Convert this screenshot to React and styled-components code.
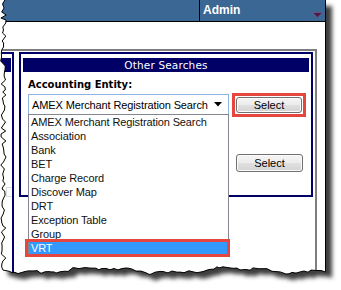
import React from 'react';
import styled, { createGlobalStyle } from 'styled-components';

const Global = createGlobalStyle`
  html, body { margin: 0; padding: 0; background: #fff; }
  body { width: 341px; height: 290px; overflow: hidden; }
  * { box-sizing: border-box; }
`;

const NAVY = '#000066';

/* ---- torn paper edge, computed once ---- */
function makeRng(seed) {
  let s = seed;
  return () => {
    s = (s * 16807) % 2147483647;
    return (s - 1) / 2147483646;
  };
}
const rnd = makeRng(98761);
const leftPts = [];
for (let y = 0; y < 270; y += 2 + Math.round(rnd() * 3)) {
  leftPts.push([+(0.6 + rnd() * 5.6).toFixed(1), y]);
}
const bottomPts = [];
for (let x = 3; x < 326; x += 2 + Math.round(rnd() * 4)) {
  const base = 270.5 + 2.2 * Math.sin(x / 21) + 1.2 * Math.sin(x / 7.3);
  bottomPts.push([x, +(base + rnd() * 3 - 1.5).toFixed(1)]);
}
const endY = 272;
const edgePts = [...leftPts, ...bottomPts, [325.5, endY]];
const clipPoly = `polygon(${[...leftPts, ...bottomPts, [326, endY], [326, 0]]
  .map(([x, y]) => `${x}px ${y}px`)
  .join(', ')})`;
const outlineD = 'M' + edgePts.map(([x, y]) => `${x} ${y}`).join(' L');
const shadowPts = [...leftPts, ...bottomPts, [326, endY], [326, 0]]
  .map(([x, y]) => `${x + 6},${y + 6}`)
  .join(' ');

const ITEMS = [
  'AMEX Merchant Registration Search',
  'Association',
  'Bank',
  'BET',
  'Charge Record',
  'Discover Map',
  'DRT',
  'Exception Table',
  'Group',
  'VRT',
];

/* ---- styled parts ---- */
const Stage = styled.div`
  position: relative;
  width: 341px;
  height: 290px;
  overflow: hidden;
  background: #fff;
`;

const Layer = styled.svg`
  position: absolute;
  left: 0;
  top: 0;
  z-index: ${(p) => p.$z};
  pointer-events: none;
`;

const Sheet = styled.div`
  position: relative;
  z-index: 1;
  width: 326px;
  height: 290px;
  background: #fff;
  border-right: 1px solid #000;
  clip-path: ${clipPoly};
`;

const TopBar = styled.div`
  display: flex;
  height: 22px;
  background: #3b6795;
  border-bottom: 1px solid #000;
`;

const BarFill = styled.div`
  flex: 1;
`;

const AdminCell = styled.div`
  width: 126px;
  border-left: 1px solid #000;
  display: flex;
  justify-content: space-between;
  padding: 0 2px 0 3px;
`;

const AdminLabel = styled.span`
  font-family: 'Liberation Sans', Arial, sans-serif;
  font-weight: bold;
  font-size: 12px;
  line-height: 20px;
  color: #fff;
`;

const Caret = styled.svg`
  align-self: flex-end;
  margin-bottom: 3px;
`;

const Workspace = styled.div`
  margin-top: 27px;
`;

const GreyFrame = styled.div`
  width: 317px;
  height: 260px;
  border-top: 2px solid #7f7f7f;
  border-right: 2px solid #7f7f7f;
  padding-top: 1px;
  display: flex;
  gap: 5px;
  align-items: flex-start;
`;

const LeftPanel = styled.div`
  width: 14px;
  align-self: stretch;
  border-top: 2px solid ${NAVY};
  border-right: 2px solid ${NAVY};
  display: flex;
  flex-direction: column;
`;

const PanelHead = styled.div`
  width: 11px;
  height: 14px;
  margin-top: 4px;
  background: ${NAVY};
`;

const PanelField = styled.div`
  width: 6px;
  height: 10px;
  margin: 115px 0 0 6px;
  border: 1px solid #dcdcdc;
  border-right: none;
`;

const SearchBox = styled.div`
  width: 294px;
  border: 2px solid ${NAVY};
  padding: 4px 2px 23px;
`;

const SearchHead = styled.div`
  height: 14px;
  background: ${NAVY};
  color: #fff;
  font-family: 'DejaVu Sans', Verdana, sans-serif;
  font-size: 10.5px;
  letter-spacing: 0.15px;
  line-height: 14px;
  text-align: center;
`;

const SearchBody = styled.div`
  padding-left: 5px;
`;

const FieldLabel = styled.div`
  margin-top: 6px;
  font-family: 'DejaVu Sans', Verdana, sans-serif;
  font-weight: bold;
  font-size: 10px;
  line-height: 14px;
  color: #000;
`;

const Row = styled.div`
  display: flex;
  align-items: flex-start;
  margin-top: ${(p) => p.$top}px;
  padding-left: ${(p) => p.$indent || 0}px;
`;

const Combo = styled.div`
  position: relative;
  z-index: 5;
  width: 201px;
  height: 21px;
  margin-top: 1px;
  border: 1px solid #8fb2de;
  background: #fff;
  display: flex;
  align-items: center;
  justify-content: space-between;
  padding: 0 6px 0 3px;
  font-family: 'Liberation Sans', Arial, sans-serif;
  font-size: 11px;
  color: #000;
`;

const ComboText = styled.span`
  white-space: nowrap;
  letter-spacing: -0.12px;
`;

const DropList = styled.ul`
  position: absolute;
  left: -1px;
  top: 100%;
  width: 201px;
  margin: 0;
  padding: 0;
  list-style: none;
  background: #fff;
  border: 1px solid #828790;
`;

const DropItem = styled.li`
  position: relative;
  height: 14px;
  line-height: 14px;
  padding-left: 2px;
  white-space: nowrap;
  letter-spacing: -0.12px;
  background: ${(p) => (p.$active ? '#3399ff' : 'transparent')};
  color: ${(p) => (p.$active ? '#fff' : '#111')};
`;

const Callout = styled.div`
  display: flex;
  margin-left: ${(p) => p.$gap || 0}px;
  padding: 1px;
  border: 3px solid #e5463d;
`;

const ItemCallout = styled.div`
  position: absolute;
  left: -4px;
  top: -2px;
  right: -2px;
  bottom: -2px;
  border: 3px solid #e5463d;
`;

const Button = styled.button`
  width: ${(p) => p.$w}px;
  height: ${(p) => p.$h}px;
  margin: 0;
  padding: 0;
  border: 1px solid #707070;
  border-radius: 3px;
  background: linear-gradient(to bottom, #f5f5f5 0%, #ececec 48%, #dfdfdf 52%, #d4d4d4 100%);
  box-shadow: inset 0 0 0 1px #fbfbfb;
  font-family: 'Liberation Sans', Arial, sans-serif;
  font-size: 11px;
  color: #000;
  line-height: 1;
`;

export default function App() {
  return (
    <Stage>
      <Global />
      <Layer $z={0} width="341" height="290">
        <defs>
          <filter id="soft" x="-10%" y="-10%" width="120%" height="120%">
            <feGaussianBlur stdDeviation="2" />
          </filter>
        </defs>
        <polygon points={shadowPts} fill="#3c3c3c" filter="url(#soft)" />
      </Layer>
      <Sheet>
        <TopBar>
          <BarFill />
          <AdminCell>
            <AdminLabel>Admin</AdminLabel>
            <Caret width="11" height="6" viewBox="0 0 11 6">
              <polygon points="0.5,0.5 10.5,0.5 5.5,5.5" fill="#4d1948" stroke="#8a5a86" strokeWidth="0.6" />
            </Caret>
          </AdminCell>
        </TopBar>
        <Workspace>
          <GreyFrame>
            <LeftPanel>
              <PanelHead />
              <PanelField />
            </LeftPanel>
            <SearchBox>
              <SearchHead>Other Searches</SearchHead>
              <SearchBody>
                <FieldLabel>Accounting Entity:</FieldLabel>
                <Row $top={1}>
                  <Combo>
                    <ComboText>AMEX Merchant Registration Search</ComboText>
                    <svg width="8" height="5" viewBox="0 0 8 5">
                      <polygon points="0,0 8,0 4,4.5" fill="#000" />
                    </svg>
                    <DropList>
                      {ITEMS.map((it) => (
                        <DropItem key={it} $active={it === 'VRT'}>
                          {it}
                          {it === 'VRT' && <ItemCallout />}
                        </DropItem>
                      ))}
                    </DropList>
                  </Combo>
                  <Callout $gap={3}>
                    <Button $w={66} $h={16}>Select</Button>
                  </Callout>
                </Row>
                <Row $top={37} $indent={208}>
                  <Button $w={67} $h={18}>Select</Button>
                </Row>
              </SearchBody>
            </SearchBox>
          </GreyFrame>
        </Workspace>
      </Sheet>
      <Layer $z={2} width="341" height="290">
        <path d={outlineD} fill="none" stroke="#000" strokeWidth="1" />
      </Layer>
    </Stage>
  );
}
